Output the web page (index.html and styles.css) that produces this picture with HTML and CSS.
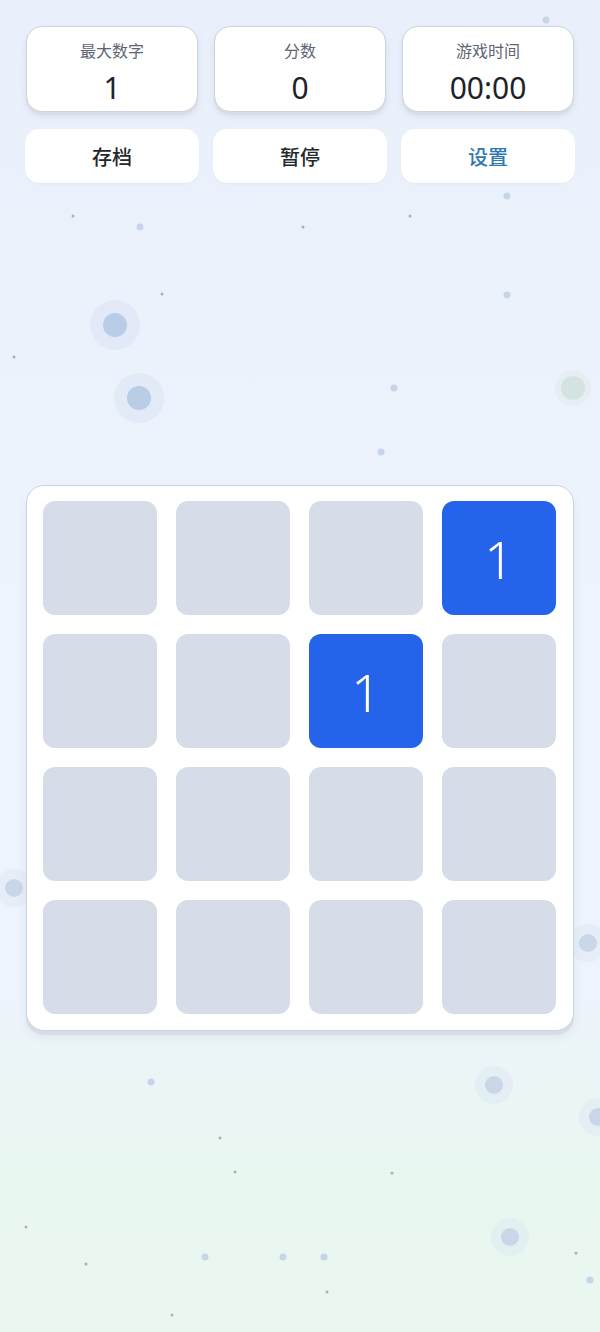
FILE: index.html
```html
<!DOCTYPE html>
<html lang="zh">
<head>
  <meta charset="UTF-8">
  <title>数字合成</title>
  <link rel="stylesheet" href="styles.css">
</head>
<body>
  <div class="dots">
    <span class="dot big" style="left:115px;top:325px"></span>
    <span class="dot big" style="left:139px;top:398px"></span>
    <span class="dot big green" style="left:573px;top:388px"></span>
    <span class="dot mid" style="left:494px;top:1085px"></span>
    <span class="dot mid" style="left:510px;top:1237px"></span>
    <span class="dot mid" style="left:14px;top:888px"></span>
    <span class="dot mid" style="left:588px;top:943px"></span>
    <span class="dot mid" style="left:598px;top:1117px"></span>
    <span class="dot small" style="left:507px;top:295px"></span>
    <span class="dot small" style="left:394px;top:388px"></span>
    <span class="dot small" style="left:140px;top:227px"></span>
    <span class="dot small" style="left:507px;top:196px"></span>
    <span class="dot small" style="left:546px;top:20px"></span>
    <span class="dot small" style="left:381px;top:452px"></span>
    <span class="dot small" style="left:151px;top:1082px"></span>
    <span class="dot small" style="left:205px;top:1257px"></span>
    <span class="dot small" style="left:283px;top:1257px"></span>
    <span class="dot small" style="left:324px;top:1257px"></span>
    <span class="dot small" style="left:590px;top:1280px"></span>
    <span class="dot tiny" style="left:73px;top:216px"></span>
    <span class="dot tiny" style="left:14px;top:357px"></span>
    <span class="dot tiny" style="left:162px;top:294px"></span>
    <span class="dot tiny" style="left:410px;top:216px"></span>
    <span class="dot tiny" style="left:303px;top:227px"></span>
    <span class="dot tiny" style="left:220px;top:1138px"></span>
    <span class="dot tiny" style="left:235px;top:1172px"></span>
    <span class="dot tiny" style="left:392px;top:1173px"></span>
    <span class="dot tiny" style="left:86px;top:1264px"></span>
    <span class="dot tiny" style="left:26px;top:1227px"></span>
    <span class="dot tiny" style="left:327px;top:1292px"></span>
    <span class="dot tiny" style="left:172px;top:1315px"></span>
    <span class="dot tiny" style="left:576px;top:1253px"></span>
  </div>

  <main class="game">
    <section class="stats">
      <div class="stat">
        <div class="stat-label">最大数字</div>
        <div class="stat-value">1</div>
      </div>
      <div class="stat">
        <div class="stat-label">分数</div>
        <div class="stat-value">0</div>
      </div>
      <div class="stat">
        <div class="stat-label">游戏时间</div>
        <div class="stat-value">00:00</div>
      </div>
    </section>

    <section class="actions">
      <button class="btn">存档</button>
      <button class="btn">暂停</button>
      <button class="btn accent">设置</button>
    </section>

    <section class="board">
      <div class="tile"></div>
      <div class="tile"></div>
      <div class="tile"></div>
      <div class="tile filled">1</div>
      <div class="tile"></div>
      <div class="tile"></div>
      <div class="tile filled">1</div>
      <div class="tile"></div>
      <div class="tile"></div>
      <div class="tile"></div>
      <div class="tile"></div>
      <div class="tile"></div>
      <div class="tile"></div>
      <div class="tile"></div>
      <div class="tile"></div>
      <div class="tile"></div>
    </section>
  </main>
</body>
</html>
```

FILE: styles.css
```css
html, body {
  margin: 0;
  padding: 0;
}
body {
  width: 600px;
  min-height: 1332px;
  background: linear-gradient(180deg, #e9f0fb 0%, #eef4fd 45%, #edf4fb 75%, #e9f7f1 88%, #eaf7f0 100%);
  font-family: "Noto Sans", "Noto Sans CJK SC", sans-serif;
  position: relative;
  overflow: hidden;
}
.dots {
  position: absolute;
  inset: 0;
  pointer-events: none;
}
.dot {
  position: absolute;
  border-radius: 50%;
  transform: translate(-50%, -50%);
  background: #b9cde6;
}
.dot.big {
  width: 24px;
  height: 24px;
  box-shadow: 0 0 0 13px rgba(210, 222, 238, 0.4);
}
.dot.green {
  background: #d3e3df;
  box-shadow: 0 0 0 6px rgba(214, 230, 226, 0.3);
}
.dot.mid {
  width: 18px;
  height: 18px;
  background: #c9d7e8;
  box-shadow: 0 0 0 10px rgba(216, 227, 240, 0.35);
}
.dot.small {
  width: 7px;
  height: 7px;
  background: #c6d6e8;
}
.dot.tiny {
  width: 3px;
  height: 3px;
  background: #a7b0bc;
}
.game {
  position: relative;
  padding: 26px 26px 0;
}
.stats {
  display: grid;
  grid-template-columns: repeat(3, 1fr);
  gap: 16px;
}
.stat {
  height: 86px;
  background: #fff;
  border: 1px solid #cfd4dc;
  border-radius: 16px;
  box-shadow: 0 3px 0 #d9dee6, 0 4px 6px rgba(160, 170, 190, 0.25);
  display: flex;
  flex-direction: column;
  align-items: center;
  box-sizing: border-box;
  padding-top: 13px;
}
.stat-label {
  font-size: 16px;
  color: #5d6573;
  line-height: 22px;
}
.stat-value {
  margin-top: 6px;
  font-size: 30px;
  color: #1f2329;
  line-height: 40px;
}
.actions {
  display: grid;
  grid-template-columns: repeat(3, 1fr);
  gap: 14px;
  margin: 17px -1px 0;
}
.btn {
  height: 54px;
  border: none;
  border-radius: 14px;
  background: #fff;
  font-family: inherit;
  font-size: 20px;
  font-weight: 500;
  color: #24272c;
  box-shadow: 0 1px 2px rgba(180, 190, 210, 0.15);
}
.btn.accent {
  color: #2b78b2;
}
.board {
  margin-top: 302px;
  height: 546px;
  background: #fff;
  border: 1px solid #cdd3dc;
  border-radius: 18px;
  box-shadow: 0 4px 0 #d6dde6, 0 6px 10px rgba(160, 175, 195, 0.2);
  box-sizing: border-box;
  padding: 15px 16px;
  display: grid;
  grid-template-columns: repeat(4, 114px);
  grid-template-rows: repeat(4, 114px);
  gap: 19px;
}
.tile {
  background: #d6dde8;
  border-radius: 12px;
  display: flex;
  align-items: center;
  justify-content: center;
  font-size: 52px;
  font-weight: 300;
  color: #fff;
}
.tile.filled {
  background: #2563eb;
}
```
